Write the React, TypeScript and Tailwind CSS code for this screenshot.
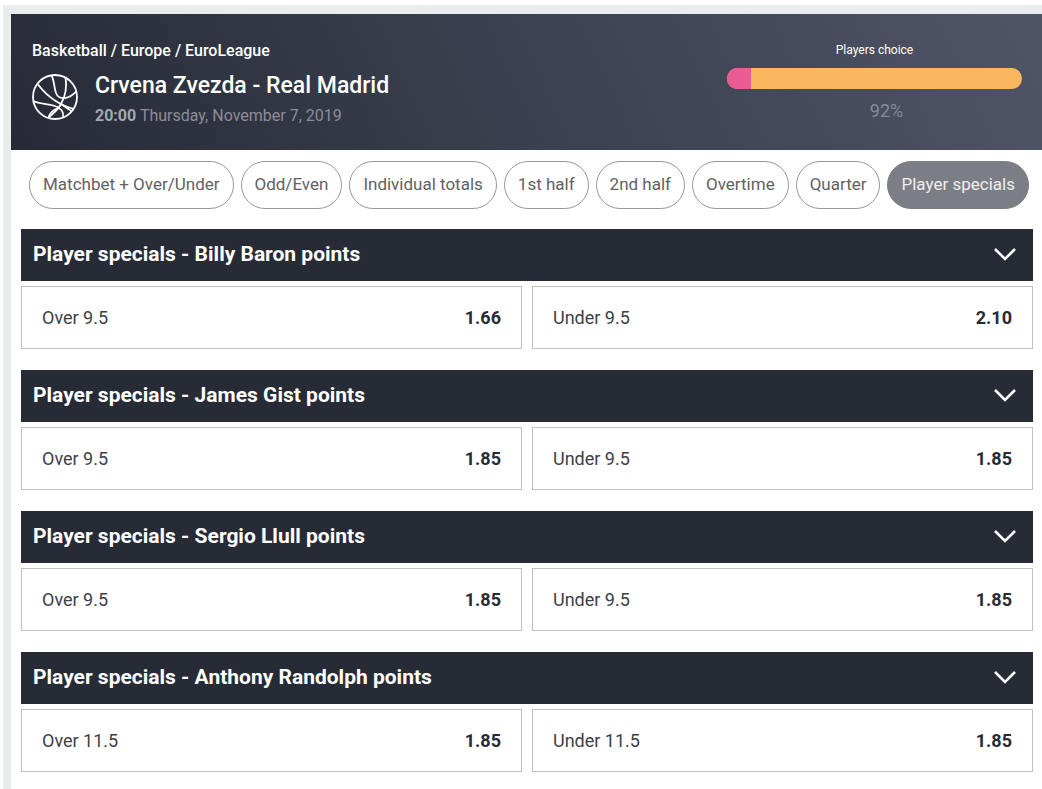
import { useState } from "react";
import clsx from "clsx";

type Outcome = { label: string; odds: string };
type Market = { player: string; outcomes: Outcome[] };

const tabs = [
  "Matchbet + Over/Under",
  "Odd/Even",
  "Individual totals",
  "1st half",
  "2nd half",
  "Overtime",
  "Quarter",
  "Player specials",
];

const markets: Market[] = [
  {
    player: "Billy Baron",
    outcomes: [
      { label: "Over 9.5", odds: "1.66" },
      { label: "Under 9.5", odds: "2.10" },
    ],
  },
  {
    player: "James Gist",
    outcomes: [
      { label: "Over 9.5", odds: "1.85" },
      { label: "Under 9.5", odds: "1.85" },
    ],
  },
  {
    player: "Sergio Llull",
    outcomes: [
      { label: "Over 9.5", odds: "1.85" },
      { label: "Under 9.5", odds: "1.85" },
    ],
  },
  {
    player: "Anthony Randolph",
    outcomes: [
      { label: "Over 11.5", odds: "1.85" },
      { label: "Under 11.5", odds: "1.85" },
    ],
  },
];

const BasketballIcon = () => (
  <svg viewBox="0 0 48 48" className="size-12 shrink-0" fill="none" stroke="currentColor" strokeWidth="1.8" aria-hidden="true">
    <circle cx="24" cy="24" r="22" />
    <path d="M20.500 2.500C23.500 8 23 15 25 20C28 28 39 26 45.500 18" />
    <path d="M34.500 4C36 13 35 22 30 31C28 35 23 40 17.500 44.500" />
    <path d="M7 11.500C15 22 28 32 43 36" />
    <path d="M2.500 28C9 31.500 16 30 24 33C31 35.500 33 39 32 44" />
    <path d="M30 31C35 34.500 39 37 41 38.500" />
    <path d="M17.500 44.500C19 39 24 36 28 34.500" />
  </svg>
);

const Chevron = () => (
  <svg viewBox="0 0 24 16" className="h-4 w-6" fill="none" stroke="currentColor" strokeWidth="2.6" aria-hidden="true">
    <path d="M2 2L12 12L22 2" />
  </svg>
);

const PlayersChoice = ({ share }: { share: number }) => (
  <div className="flex w-[295px] flex-col items-center">
    <span className="text-xs leading-4">Players choice</span>
    <div className="mt-[10px] flex h-[21px] w-full overflow-hidden rounded-full bg-[#f9b85f]">
      <div className="bg-[#e95b92]" style={{ width: `${100 - share}%` }} />
    </div>
    <span className="mt-[10px] pl-6 text-lg leading-6 text-[#878b98]">{share}%</span>
  </div>
);

const MatchHeader = () => (
  <header className="flex justify-between bg-linear-[65deg] from-[#272a36] via-[#3b4150] to-[#505467] pt-7 pr-5 pb-[22px] pl-5 text-white">
    <div>
      <p className="pl-px text-base leading-[18px] font-medium">Basketball / Europe / EuroLeague</p>
      <div className="mt-[13px] flex items-start gap-4">
        <BasketballIcon />
        <div>
          <h1 className="text-[23px] leading-[26px] font-medium">Crvena Zvezda - Real Madrid</h1>
          <p className="mt-[5px] text-base leading-6 text-[#8b8e99]">
            <strong className="text-[#a6a8b0]">20:00</strong> Thursday, November 7, 2019
          </p>
        </div>
      </div>
    </div>
    <PlayersChoice share={92} />
  </header>
);

const MarketPanel = ({ market }: { market: Market }) => {
  const [open, setOpen] = useState(true);

  return (
    <section>
      <h2>
        <button
          type="button"
          aria-expanded={open}
          onClick={() => setOpen(!open)}
          className="flex h-[52px] w-full items-center justify-between bg-[#272b35] pr-4 pl-3 text-[21px] font-bold text-white"
        >
          Player specials - {market.player} points
          <Chevron />
        </button>
      </h2>
      {open && (
        <div className="mt-[5px] grid grid-cols-2 gap-[10px]">
          {market.outcomes.map((outcome) => (
            <button
              key={outcome.label}
              type="button"
              className="flex h-[63px] items-center justify-between border border-[#bfbfc1] px-5 text-lg text-[#3c3f49]"
            >
              <span>{outcome.label}</span>
              <span className="font-bold text-[#272b35]">{outcome.odds}</span>
            </button>
          ))}
        </div>
      )}
    </section>
  );
};

const App = () => {
  const [activeTab, setActiveTab] = useState("Player specials");

  return (
    <div className="bg-white pt-[5px] pl-[3px] font-[Roboto,sans-serif]">
      <div className="min-h-screen border-t-[9px] border-l-8 border-[#e9eded]">
        <MatchHeader />
        <nav className="flex gap-[7px] pt-[11px] pl-[18px]">
          {tabs.map((tab) => (
            <button
              key={tab}
              type="button"
              aria-pressed={tab === activeTab}
              onClick={() => setActiveTab(tab)}
              className={clsx(
                "h-12 rounded-full border px-[13px] text-[17px] whitespace-nowrap",
                tab === activeTab
                  ? "border-[#7c7e86] bg-[#7c7e86] text-[#eeeeef]"
                  : "border-[#98989a] bg-white text-[#626264]"
              )}
            >
              {tab}
            </button>
          ))}
        </nav>
        <main className="flex flex-col gap-[21px] pt-5 pr-[9px] pl-[10px]">
          {markets.map((market) => (
            <MarketPanel key={market.player} market={market} />
          ))}
        </main>
      </div>
    </div>
  );
};

export default App;
